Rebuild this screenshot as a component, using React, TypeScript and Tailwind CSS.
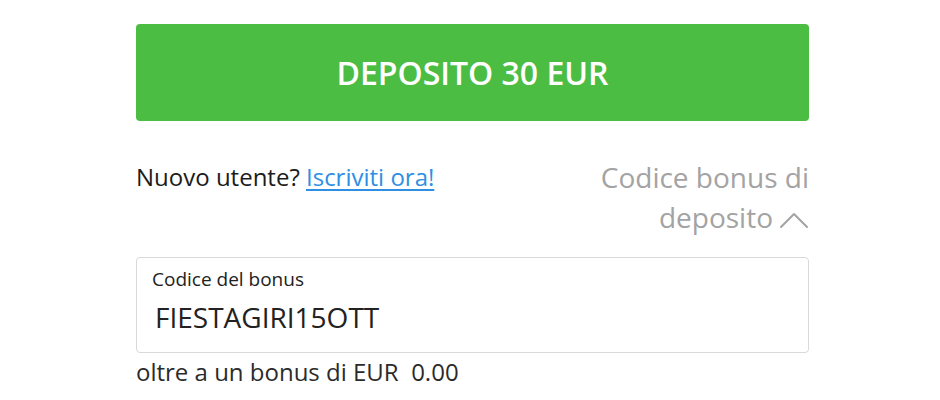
import { useState } from 'react';

function ChevronUp() {
  return (
    <svg width="30" height="18" viewBox="0 0 30 18" fill="none" className="ml-[6px] inline-block align-[-1px]">
      <path d="M2 16 L15 3 L28 16" stroke="#a3a3a3" strokeWidth="2" strokeLinecap="round" strokeLinejoin="round" />
    </svg>
  );
}

export default function App() {
  const [code, setCode] = useState('FIESTAGIRI15OTT');

  return (
    <div className="w-[940px] h-[400px] bg-white overflow-hidden font-['Open_Sans',sans-serif]">
      <div className="ml-[136px] w-[673px] pt-[24px]">
        <button className="w-full h-[97px] rounded-[4px] bg-[#4bbd43] text-white text-[32px] font-semibold">
          DEPOSITO 30 EUR
        </button>

        <div className="mt-[36px] flex justify-between items-start">
          <p className="text-[24px] leading-[40px] text-[#1c1c1c]">
            Nuovo utente?{' '}
            <a href="#" className="text-[#2f8fe3] underline underline-offset-[3px]">
              Iscriviti ora!
            </a>
          </p>
          <div className="w-[225px] text-right text-[28px] leading-[40px] text-[#a3a3a3]">
            Codice bonus di deposito
            <ChevronUp />
          </div>
        </div>

        <div className="mt-[20px] h-[96px] rounded-[4px] border border-[#d9d9d9] px-[15px] pt-[8px]">
          <label className="block text-[19px] leading-[26px] text-[#222]">Codice del bonus</label>
          <input
            value={code}
            onChange={(e) => setCode(e.target.value)}
            className="mt-[6px] w-full pl-[3px] text-[28px] leading-[38px] text-[#222] outline-none bg-transparent"
          />
        </div>

        <p className="mt-[3px] text-[24px] leading-[32px] text-[#2b2b2b] whitespace-pre">
          oltre a un bonus di EUR  0.00
        </p>
      </div>
    </div>
  );
}
